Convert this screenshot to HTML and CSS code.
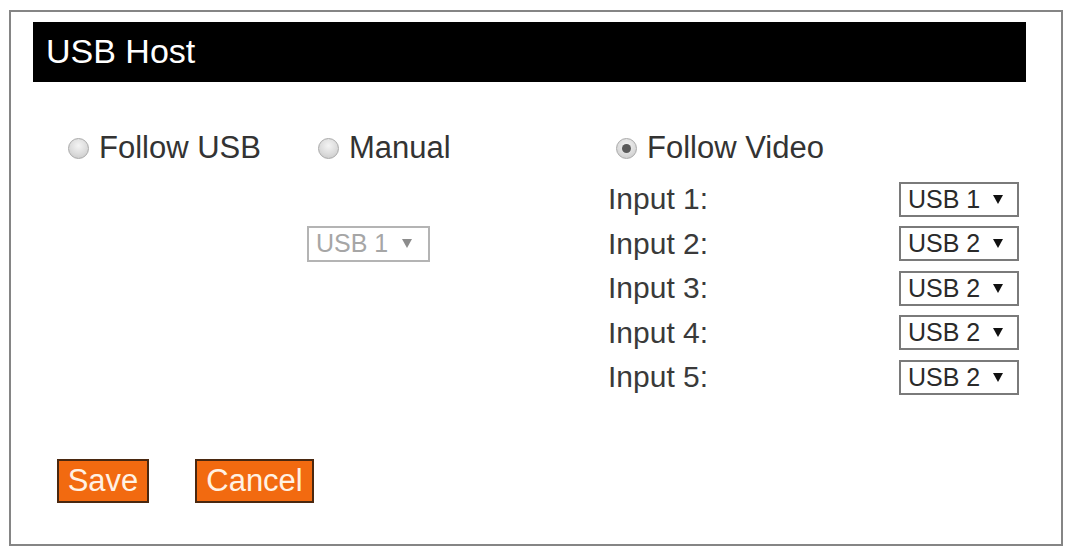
FILE: index.html
```html
<!DOCTYPE html>
<html>
<head>
<meta charset="utf-8">
<link rel="stylesheet" href="styles.css">
</head>
<body>
<div class="panel">
  <div class="header">USB Host</div>
  <div class="content">
    <div class="grid">
      <div class="opt opt-usb"><span class="radio"></span>Follow USB</div>
      <div class="opt opt-manual"><span class="radio"></span>Manual</div>
      <div class="opt opt-video"><span class="radio checked"></span>Follow Video</div>

      <div class="sel sel-manual disabled"><span>USB 1</span><svg class="arrow" width="10" height="9" viewBox="0 0 10 9"><polygon points="0,0 10,0 5,9"/></svg></div>

      <div class="label r1">Input 1:</div>
      <div class="sel r1 c4"><span>USB 1</span><svg class="arrow" width="10" height="9" viewBox="0 0 10 9"><polygon points="0,0 10,0 5,9"/></svg></div>
      <div class="label r2">Input 2:</div>
      <div class="sel r2 c4"><span>USB 2</span><svg class="arrow" width="10" height="9" viewBox="0 0 10 9"><polygon points="0,0 10,0 5,9"/></svg></div>
      <div class="label r3">Input 3:</div>
      <div class="sel r3 c4"><span>USB 2</span><svg class="arrow" width="10" height="9" viewBox="0 0 10 9"><polygon points="0,0 10,0 5,9"/></svg></div>
      <div class="label r4">Input 4:</div>
      <div class="sel r4 c4"><span>USB 2</span><svg class="arrow" width="10" height="9" viewBox="0 0 10 9"><polygon points="0,0 10,0 5,9"/></svg></div>
      <div class="label r5">Input 5:</div>
      <div class="sel r5 c4"><span>USB 2</span><svg class="arrow" width="10" height="9" viewBox="0 0 10 9"><polygon points="0,0 10,0 5,9"/></svg></div>
    </div>
    <div class="buttons">
      <div class="btn btn-save">Save</div>
      <div class="btn btn-cancel">Cancel</div>
    </div>
  </div>
</div>
</body>
</html>
```

FILE: styles.css
```css
html, body {
  margin: 0;
  padding: 0;
  background: #ffffff;
}
body {
  font-family: "Liberation Sans", Arial, sans-serif;
  color: #333333;
}
.panel {
  box-sizing: border-box;
  width: 1054px;
  margin: 10px 0 0 9px;
  border: 2px solid #858585;
  padding-bottom: 41px;
}
.header {
  margin: 10px 35px 0 22px;
  height: 60px;
  background: #000000;
  color: #ffffff;
  font-size: 34px;
  line-height: 58px;
  padding-left: 13px;
}
.content {
  padding-left: 46px;
}
.grid {
  margin-top: 48px;
  display: grid;
  grid-template-columns: 250px 301px 291px 120px;
  grid-template-rows: 47px repeat(5, 44.5px);
}
.opt {
  display: flex;
  align-items: center;
  height: 36px;
  font-size: 31px;
  line-height: 36px;
  grid-row: 1;
  align-self: start;
}
.opt-usb { grid-column: 1; padding-left: 11px; }
.opt-manual { grid-column: 2; padding-left: 11px; }
.opt-video { grid-column: 3 / 5; padding-left: 8px; }
.radio {
  box-sizing: border-box;
  width: 21px;
  height: 21px;
  border-radius: 50%;
  border: 1px solid #a9a9a9;
  background: radial-gradient(circle at 50% 35%, #f4f4f4 0%, #dcdcdc 55%, #c4c4c4 100%);
  margin-right: 10px;
  display: flex;
  align-items: center;
  justify-content: center;
  flex: none;
}
.radio.checked::after {
  content: "";
  width: 9px;
  height: 9px;
  border-radius: 50%;
  background: #5a5a5a;
}
.label {
  grid-column: 3;
  font-size: 30px;
  line-height: 44.5px;
  color: #3a3a3a;
}
.r1 { grid-row: 2; }
.r2 { grid-row: 3; }
.r3 { grid-row: 4; }
.r4 { grid-row: 5; }
.r5 { grid-row: 6; }
.c4 { grid-column: 4; }
.sel {
  box-sizing: border-box;
  align-self: center;
  height: 35px;
  width: 120px;
  border: 2px solid #7a7a7a;
  background: #ffffff;
  display: flex;
  align-items: center;
  padding-left: 7px;
  font-size: 25px;
  color: #2a2a2a;
}
.sel span {
  flex: none;
}
.sel .arrow {
  margin-left: 13px;
  fill: #111111;
}
.sel-manual {
  grid-column: 2;
  grid-row: 3;
  width: 123px;
  height: 36px;
}
.sel.disabled {
  border-color: #b4b4b4;
  color: #a6a6a6;
}
.sel.disabled .arrow {
  fill: #8c8c8c;
  margin-left: 14px;
}
.buttons {
  margin-top: 59px;
  display: flex;
  gap: 46px;
}
.btn {
  box-sizing: border-box;
  height: 44px;
  border: 2px solid #4a2810;
  background: #f26a10;
  color: #fff2e4;
  font-size: 31px;
  line-height: 40px;
  text-align: center;
}
.btn-save { width: 92px; }
.btn-cancel { width: 119px; }
```
